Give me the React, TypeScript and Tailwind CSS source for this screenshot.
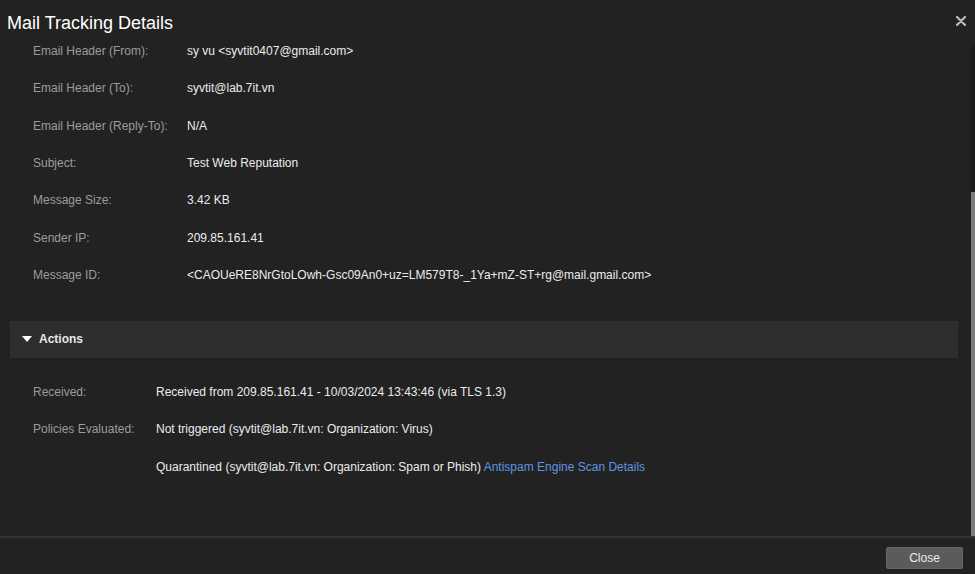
import React from "react";

const topRows: [string, string][] = [
  ["Email Header (From):", "sy vu <syvtit0407@gmail.com>"],
  ["Email Header (To):", "syvtit@lab.7it.vn"],
  ["Email Header (Reply-To):", "N/A"],
  ["Subject:", "Test Web Reputation"],
  ["Message Size:", "3.42 KB"],
  ["Sender IP:", "209.85.161.41"],
  ["Message ID:", "<CAOUeRE8NrGtoLOwh-Gsc09An0+uz=LM579T8-_1Ya+mZ-ST+rg@mail.gmail.com>"],
];

export default function App() {
  return (
    <div
      className="w-[975px] h-[574px] bg-[#222222] flex flex-col overflow-hidden text-[12px]"
      style={{ fontFamily: '"Liberation Sans", Arial, sans-serif' }}
    >
      {/* Header */}
      <div className="h-[38px] shrink-0 flex items-start justify-between pl-[7px] pr-[9px] pt-[11px]">
        <div className="text-[18px] leading-[24px] text-white">Mail Tracking Details</div>
        <svg width="10" height="10" viewBox="0 0 10 10" className="mt-[5px]">
          <path d="M1 1 L9 9 M9 1 L1 9" stroke="#b4b8bc" strokeWidth="2.4" strokeLinecap="round" />
        </svg>
      </div>

      {/* Body with scrollbar */}
      <div className="flex-1 flex min-h-0">
        <div className="flex-1 overflow-hidden">
          <div className="-mt-[5.67px]">
            {topRows.map(([k, v]) => (
              <div key={k} className="h-[37.33px] flex items-center pl-[33px]">
                <div className="w-[154px] shrink-0 text-[#9c9c9c]">{k}</div>
                <div className="text-[#ececec] whitespace-nowrap">{v}</div>
              </div>
            ))}
            <div className="h-[27.33px]" />
            <div className="ml-[10px] mr-[13px] h-[37px] bg-[#2e2e2e] flex items-center pl-[12px]">
              <svg width="10" height="6" viewBox="0 0 10 6">
                <path d="M0 0 L10 0 L5 6 Z" fill="#ffffff" />
              </svg>
              <span className="ml-[7px] font-bold text-[#e6e6e6]">Actions</span>
            </div>
            <div className="h-[15.33px]" />
            <div className="h-[37.33px] flex items-center pl-[33px]">
              <div className="w-[123px] shrink-0 text-[#9c9c9c]">Received:</div>
              <div className="text-[#ececec] whitespace-nowrap">
                Received from 209.85.161.41 - 10/03/2024 13:43:46 (via TLS 1.3)
              </div>
            </div>
            <div className="h-[37.33px] flex items-center pl-[33px]">
              <div className="w-[123px] shrink-0 text-[#9c9c9c]">Policies Evaluated:</div>
              <div className="text-[#ececec] whitespace-nowrap">
                Not triggered (syvtit@lab.7it.vn: Organization: Virus)
              </div>
            </div>
            <div className="h-[37.33px] flex items-center pl-[33px]">
              <div className="w-[123px] shrink-0" />
              <div className="text-[#ececec] whitespace-nowrap">
                Quarantined (syvtit@lab.7it.vn: Organization: Spam or Phish){" "}
                <span className="text-[#5f95e0]">Antispam Engine Scan Details</span>
              </div>
            </div>
          </div>
        </div>
        {/* Scrollbar */}
        <div className="w-[4px] shrink-0 flex flex-col">
          <div className="h-[7px]" />
          <div className="flex-1 bg-[#1a1a1a] flex flex-col">
            <div className="h-[147px]" />
            <div className="flex-1 bg-[#7b7b7b]" />
          </div>
        </div>
      </div>

      {/* Divider */}
      <div className="h-[2px] shrink-0 bg-[#343434]" />

      {/* Footer */}
      <div className="h-[36px] shrink-0 flex items-start justify-end pr-[12px] pt-[9px]">
        <button className="w-[77px] h-[22px] bg-[#5b5b5b] border border-[#676767] rounded-[2px] text-[#ececec] text-[12px] leading-none">
          Close
        </button>
      </div>
    </div>
  );
}
